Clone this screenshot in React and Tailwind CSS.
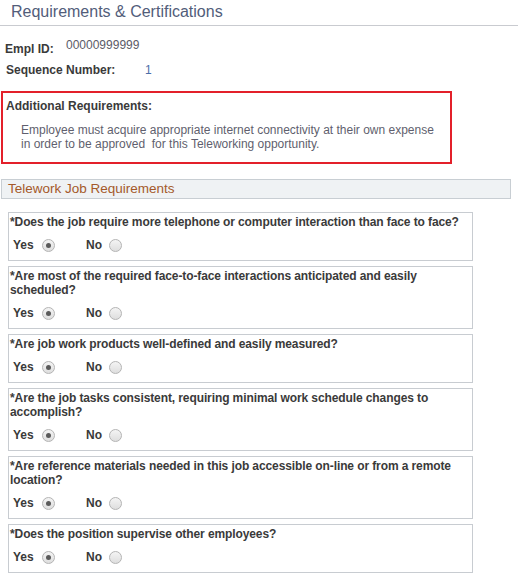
import React from "react";

const questions = [
  "*Does the job require more telephone or computer interaction than face to face?",
  "*Are most of the required face-to-face interactions anticipated and easily scheduled?",
  "*Are job work products well-defined and easily measured?",
  "*Are the job tasks consistent, requiring minimal work schedule changes to accomplish?",
  "*Are reference materials needed in this job accessible on-line or from a remote location?",
  "*Does the position supervise other employees?",
];

const Radio = ({ checked }) => (
  <span className="inline-flex items-center justify-center w-[13px] h-[13px] rounded-full border border-[#b4b4b4] bg-gradient-to-b from-[#f4f4f4] to-[#dedede]">
    {checked && <span className="w-[5px] h-[5px] rounded-full bg-[#5a5a5a]" />}
  </span>
);

const Question = ({ text }) => (
  <div className="ml-[8px] w-[465px] border border-[#c8ccd1] pt-[2px] pb-[7px]">
    <div className="pl-[1px] pr-[2px] text-[12px] leading-[14px] font-bold text-[#3a3a3a] tracking-[-0.1px]">{text}</div>
    <div className="flex items-center h-[16px] mt-[8px] pl-[4px] text-[12px] font-bold text-[#3a3a3a]">
      <span className="w-[29px]">Yes</span>
      <Radio checked />
      <span className="ml-[31px] w-[23px]">No</span>
      <Radio />
    </div>
  </div>
);

export default function App() {
  return (
    <div className="w-[518px] h-[585px] bg-white overflow-hidden font-['Liberation_Sans',Arial,sans-serif]">
      <div className="h-[26px] border-b border-[#c9cbd0] pl-[11px] pt-[3px] text-[16px] leading-[18px] text-[#525d7a]">
        Requirements &amp; Certifications
      </div>

      <div className="pt-[12px]">
        <div className="flex h-[20px] text-[12px] leading-[14px]">
          <span className="w-[66px] pl-[5px] pt-[4px] font-bold text-[#3a3a3a]">Empl ID:</span>
          <span className="text-[#5b5b68]">00000999999</span>
        </div>
        <div className="flex h-[20px] text-[12px] leading-[14px]">
          <span className="w-[145px] pl-[6px] pt-[5px] font-bold text-[#3a3a3a]">Sequence Number:</span>
          <span className="pt-[5px] text-[#4a6ea8]">1</span>
        </div>
      </div>

      <div className="mt-[13px] ml-[1px] w-[451px] h-[73px] border-2 border-[#e3202a] pl-[3px] pt-[6px]">
        <div className="text-[12px] leading-[14px] font-bold text-[#3a3a3a]">Additional Requirements:</div>
        <div className="mt-[10px] pl-[15px] text-[12px] leading-[14px] text-[#5f5f6e]">
          <div>Employee must acquire appropriate internet connectivity at their own expense</div>
          <div>in order to be approved&nbsp; for this Teleworking opportunity.</div>
        </div>
      </div>

      <div className="mt-[15px] ml-[1px] w-[510px] h-[20px] border border-[#c8ced3] bg-[#eff2f4] pl-[6px] text-[13.5px] leading-[18px] text-[#a4592a]">
        Telework Job Requirements
      </div>

      <div className="mt-[13px] flex flex-col gap-[5px]">
        {questions.map((q) => (
          <Question key={q} text={q} />
        ))}
      </div>
    </div>
  );
}
